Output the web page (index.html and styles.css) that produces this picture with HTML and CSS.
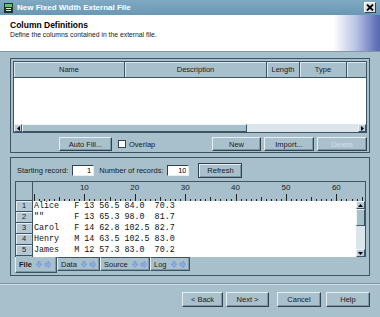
FILE: index.html
```html
<!DOCTYPE html>
<html lang="en">
<head>
<meta charset="UTF-8">
<meta name="viewport" content="width=device-width, initial-scale=1.0">
<title>New Fixed Width External File</title>
<link rel="stylesheet" href="styles.css">
</head>
<body>

<div class="window">
  <div class="titleBar">
    <svg class="appIcon" width="9" height="10" viewBox="0 0 9 10">
      <rect x="0" y="0" width="9" height="10" fill="#1d3327"/>
      <rect x="1" y="1" width="7" height="3" fill="#5cc76a"/>
      <rect x="2" y="5" width="5" height="1" fill="#d8efe0"/>
      <rect x="2" y="7" width="5" height="1" fill="#d8efe0"/>
    </svg>
    <span class="titleText">New Fixed Width External File</span>
    <span class="closeBtn">
      <svg width="8" height="7" viewBox="0 0 8 7"><path d="M1 0.5 L7 6.5 M7 0.5 L1 6.5" stroke="#000" stroke-width="1.8"/></svg>
    </span>
  </div>

  <div class="header">
    <div class="headTitle">Column Definitions</div>
    <div class="headSub">Define the columns contained in the external file.</div>
  </div>

  <div class="content">
    <!-- column definitions table -->
    <div class="panel columnsPanel">
      <div class="grid">
        <div class="gridHead">
          <div class="hCell colName">Name</div>
          <div class="hCell colDesc">Description</div>
          <div class="hCell colLen">Length</div>
          <div class="hCell colType">Type</div>
          <div class="hCell colEnd"></div>
        </div>
        <div class="gridBody"></div>
        <div class="hScroll">
          <span class="sbBtn"><svg width="3" height="5" viewBox="0 0 3 5"><path d="M3 0 L0 2.5 L3 5 Z" fill="#000"/></svg></span>
          <span class="hThumb"></span>
          <span class="sbTrack"></span>
          <span class="sbBtn"><svg width="3" height="5" viewBox="0 0 3 5"><path d="M0 0 L3 2.5 L0 5 Z" fill="#000"/></svg></span>
        </div>
      </div>
      <div class="btnRow">
        <button class="btn autoFillBtn">Auto Fill...</button>
        <label class="checkLabel"><span class="checkBox"></span>Overlap</label>
        <button class="btn newBtn">New</button>
        <button class="btn">Import...</button>
        <button class="btn" disabled>Delete</button>
      </div>
    </div>

    <!-- file preview -->
    <div class="panel dataPanel">
      <div class="recordRow">
        <span class="recLabel">Starting record:</span>
        <input class="numBox" type="text" value="1">
        <span class="recLabel recLabel2">Number of records:</span>
        <input class="numBox" type="text" value="10">
        <button class="btn refreshBtn">Refresh</button>
      </div>

      <div class="viewer">
        <div class="rulerRow">
          <div class="corner"></div>
          <div class="ruler">
            <div class="rulerNums"><span>10</span><span>20</span><span>30</span><span>40</span><span>50</span><span>60</span></div>
            <div class="ticks"></div>
          </div>
        </div>
        <div class="viewBody">
          <div class="rowHeads">
            <div>1</div><div>2</div><div>3</div><div>4</div><div>5</div>
          </div>
          <div class="lines">
            <div>Alice   F 13 56.5 84.0  70.3</div>
            <div>""      F 13 65.3 98.0  81.7</div>
            <div>Carol   F 14 62.8 102.5 82.7</div>
            <div>Henry   M 14 63.5 102.5 83.0</div>
            <div>James   M 12 57.3 83.0  70.2</div>
          </div>
          <div class="vScroll">
            <span class="sbBtn"><svg width="5" height="3" viewBox="0 0 5 3"><path d="M0 3 L2.5 0 L5 3 Z" fill="#000"/></svg></span>
            <span class="vThumb"></span>
            <span class="sbTrack"></span>
            <span class="sbBtn"><svg width="5" height="3" viewBox="0 0 5 3"><path d="M0 0 L2.5 3 L5 0 Z" fill="#000"/></svg></span>
          </div>
        </div>
      </div>

      <div class="tabs">
        <div class="tab active tabFile">File
          <svg class="tabArrows" width="15" height="7" viewBox="0 0 15 7"><path d="M2 0 H4 V3 H6 L3 6.5 L0 3 H2 Z M9 2 H12 V0 L15 3.5 L12 7 V5 H9 Z" fill="#8aace6" stroke="#6b8fcf" stroke-width="0.5"/></svg>
        </div>
        <div class="tab tabData">Data
          <svg class="tabArrows" width="15" height="7" viewBox="0 0 15 7"><path d="M2 0 H4 V3 H6 L3 6.5 L0 3 H2 Z M9 2 H12 V0 L15 3.5 L12 7 V5 H9 Z" fill="#8aace6" stroke="#6b8fcf" stroke-width="0.5"/></svg>
        </div>
        <div class="tab tabSource">Source
          <svg class="tabArrows" width="15" height="7" viewBox="0 0 15 7"><path d="M2 0 H4 V3 H6 L3 6.5 L0 3 H2 Z M9 2 H12 V0 L15 3.5 L12 7 V5 H9 Z" fill="#8aace6" stroke="#6b8fcf" stroke-width="0.5"/></svg>
        </div>
        <div class="tab tabLog">Log
          <svg class="tabArrows" width="15" height="7" viewBox="0 0 15 7"><path d="M2 0 H4 V3 H6 L3 6.5 L0 3 H2 Z M9 2 H12 V0 L15 3.5 L12 7 V5 H9 Z" fill="#8aace6" stroke="#6b8fcf" stroke-width="0.5"/></svg>
        </div>
      </div>
    </div>
  </div>

  <div class="footer">
    <button class="btn backBtn">&lt; Back</button>
    <button class="btn nextBtn">Next &gt;</button>
    <button class="btn cancelBtn">Cancel</button>
    <button class="btn helpBtn">Help</button>
  </div>
</div>

</body>
</html>
```

FILE: styles.css
```css
* {
  box-sizing: border-box;
}
body {
  margin: 0;
  font-family: "Liberation Sans", Arial, sans-serif;
  font-size: 7.5px;
  color: #1b1b1b;
  background-color: #a8bfcc;
}
.window {
  width: 380px;
  height: 317px;
  overflow: hidden;
  background-color: #a8bfcc;
}

/* title bar */
.titleBar {
  height: 15px;
  display: flex;
  align-items: center;
  padding: 0 4px;
  background: linear-gradient(#80aac3, #6a97b4);
  color: #fff;
  font-weight: bold;
  font-size: 8px;
}
.appIcon {
  margin-right: 4px;
}
.closeBtn {
  margin-left: auto;
  width: 12px;
  height: 11px;
  display: flex;
  align-items: center;
  justify-content: center;
  background-color: #dbe3e8;
  border: 1px solid;
  border-color: #fff #2f4350 #2f4350 #fff;
}

/* white header */
.header {
  height: 37px;
  padding: 5px 0 0 10px;
  background: linear-gradient(90deg, #fff 0, #fff 333px, #b9c3e3 356px, #5a6cb3 378px);
  border-bottom: 1px solid #7e98a8;
}
.headTitle {
  font-size: 8.5px;
  font-weight: bold;
  line-height: 10px;
  color: #000;
}
.headSub {
  font-size: 6.8px;
  line-height: 9px;
}

.content {
  padding: 6px 10px 0;
}
.panel {
  border: 1px solid #3c5464;
}

/* column table */
.columnsPanel {
  padding: 2px 2px 1px;
}
.grid {
  border: 1px solid #3c5464;
  background-color: #fff;
}
.gridHead {
  display: flex;
  height: 16px;
  background-color: #a8bfcc;
  border-bottom: 1px solid #3c5464;
}
.hCell {
  height: 15px;
  line-height: 15px;
  text-align: center;
  border-right: 1px solid #3c5464;
  box-shadow: inset 1px 1px 0 #dde8ee;
}
.colName { width: 111px; }
.colDesc { width: 142px; }
.colLen { width: 33px; }
.colType { width: 47px; }
.colEnd { width: 19px; border-right: none; }
.gridBody {
  height: 46px;
}
.hScroll {
  display: flex;
  height: 8px;
}
.sbBtn {
  width: 8px;
  height: 8px;
  display: flex;
  align-items: center;
  justify-content: center;
  background-color: #b9ccd7;
  border: 1px solid;
  border-color: #eef4f7 #3c5464 #3c5464 #eef4f7;
}
.hThumb {
  width: 225px;
  background-color: #a8bfcc;
  border: 1px solid;
  border-color: #eef4f7 #3c5464 #3c5464 #eef4f7;
}
.sbTrack {
  flex: 1;
  background-color: #dbe6ec;
}

.btnRow {
  display: flex;
  align-items: center;
  height: 14px;
  margin-top: 4px;
}
.btn {
  height: 14px;
  padding: 0;
  font-family: inherit;
  font-size: 7.5px;
  color: #1b1b1b;
  background-color: #a9c0cd;
  border: 1px solid;
  border-color: #e6eef2 #2f4350 #2f4350 #e6eef2;
  box-shadow: inset -1px -1px 0 #7f97a6;
}
.btn:disabled {
  color: #d3e0e7;
}
.btnRow .btn {
  width: 50px;
  margin-left: 3px;
}
.btnRow .autoFillBtn {
  width: 53px;
  margin-left: 46px;
}
.btnRow .newBtn {
  width: 49px;
  margin-left: auto;
}
.checkLabel {
  display: flex;
  align-items: center;
  margin-left: 6px;
}
.checkBox {
  width: 8px;
  height: 8px;
  margin-right: 3px;
  background-color: #fff;
  border: 1px solid #2f4350;
}

/* file preview */
.dataPanel {
  margin-top: 4px;
  padding: 4px 3px 2px 4px;
}
.recordRow {
  display: flex;
  align-items: center;
  height: 16px;
  padding-left: 2px;
}
.numBox {
  width: 22px;
  height: 11px;
  margin-left: 4px;
  padding: 0 2px;
  font-family: inherit;
  font-size: 7.5px;
  text-align: right;
  color: #000;
  background-color: #fff;
  border: 1px solid;
  border-color: #2f4350 #e6eef2 #e6eef2 #2f4350;
}
.recLabel2 {
  margin-left: 5px;
}
.refreshBtn {
  width: 44px;
  height: 15px;
  margin-left: 9px;
  border: 1px solid #2f4350;
  box-shadow: inset 1px 1px 0 #e6eef2, inset -1px -1px 0 #7f97a6;
}

.viewer {
  margin-top: 3px;
  height: 76px;
  border: 1px solid #3c5464;
  border-bottom: none;
  overflow: hidden;
}
.rulerRow {
  display: flex;
  height: 19px;
}
.corner {
  width: 17px;
  border-right: 1px solid #3c5464;
  border-bottom: 1px solid #3c5464;
}
.ruler {
  flex: 1;
  padding-left: 1px;
}
.rulerNums {
  display: flex;
  height: 11px;
  padding-left: 25.2px;
  font-size: 8px;
  line-height: 11px;
  color: #222;
}
.rulerNums span {
  width: 50.4px;
  text-align: center;
}
.ticks {
  height: 8px;
  margin-left: -0.5px;
  background-image:
    repeating-linear-gradient(90deg, #222 0 1px, transparent 1px 5.04px),
    repeating-linear-gradient(90deg, #222 0 1px, transparent 1px 25.2px),
    repeating-linear-gradient(90deg, #222 0 1px, transparent 1px 50.4px);
  background-size: 100% 2px, 100% 4px, 100% 7px;
  background-repeat: no-repeat;
  background-position: 0 100%, 0 100%, 0 100%;
}
.viewBody {
  display: flex;
  height: 56px;
}
.rowHeads {
  width: 17px;
  border-right: 1px solid #3c5464;
}
.rowHeads div {
  height: 11px;
  line-height: 10px;
  text-align: center;
  background-color: #b3c8d4;
  border-bottom: 1px solid #3c5464;
  box-shadow: inset 1px 1px 0 #e6eef2;
}
.lines {
  flex: 1;
  padding-left: 1px;
  background-color: #fff;
  font-family: "Liberation Mono", "Courier New", monospace;
  font-size: 8.4px;
  line-height: 11px;
  color: #111;
}
.lines div {
  height: 11px;
  white-space: pre;
}
.vScroll {
  display: flex;
  flex-direction: column;
  width: 9px;
  background-color: #fff;
}
.vScroll .sbBtn {
  width: 9px;
}
.vThumb {
  height: 17px;
  background-color: #a8bfcc;
  border: 1px solid;
  border-color: #eef4f7 #3c5464 #3c5464 #eef4f7;
}

/* tabs under the preview */
.tabs {
  display: flex;
  height: 16px;
}
.tab {
  display: flex;
  align-items: center;
  height: 14px;
  padding-left: 3px;
  background-color: #a8bfcc;
  border: 1px solid #3c5464;
  border-left-color: #e6eef2;
  box-shadow: inset -1px -1px 0 #7f97a6;
}
.tab.active {
  height: 16px;
  font-weight: bold;
  border-top: none;
}
.tabArrows {
  margin-left: 4px;
}
.tabFile { width: 42px; }
.tabData { width: 43px; }
.tabSource { width: 50px; }
.tabLog { width: 40px; }

/* wizard buttons */
.footer {
  display: flex;
  justify-content: flex-end;
  margin-top: 7px;
  padding: 8px 10px 0 0;
  border-top: 1px solid #7f97a6;
  box-shadow: inset 0 1px 0 #c9d9e2;
}
.footer .btn {
  height: 15px;
}
.backBtn { width: 41px; }
.nextBtn { width: 43px; margin-left: 3px; }
.cancelBtn { width: 44px; margin-left: 8px; }
.helpBtn { width: 44px; margin-left: 5px; }
```
